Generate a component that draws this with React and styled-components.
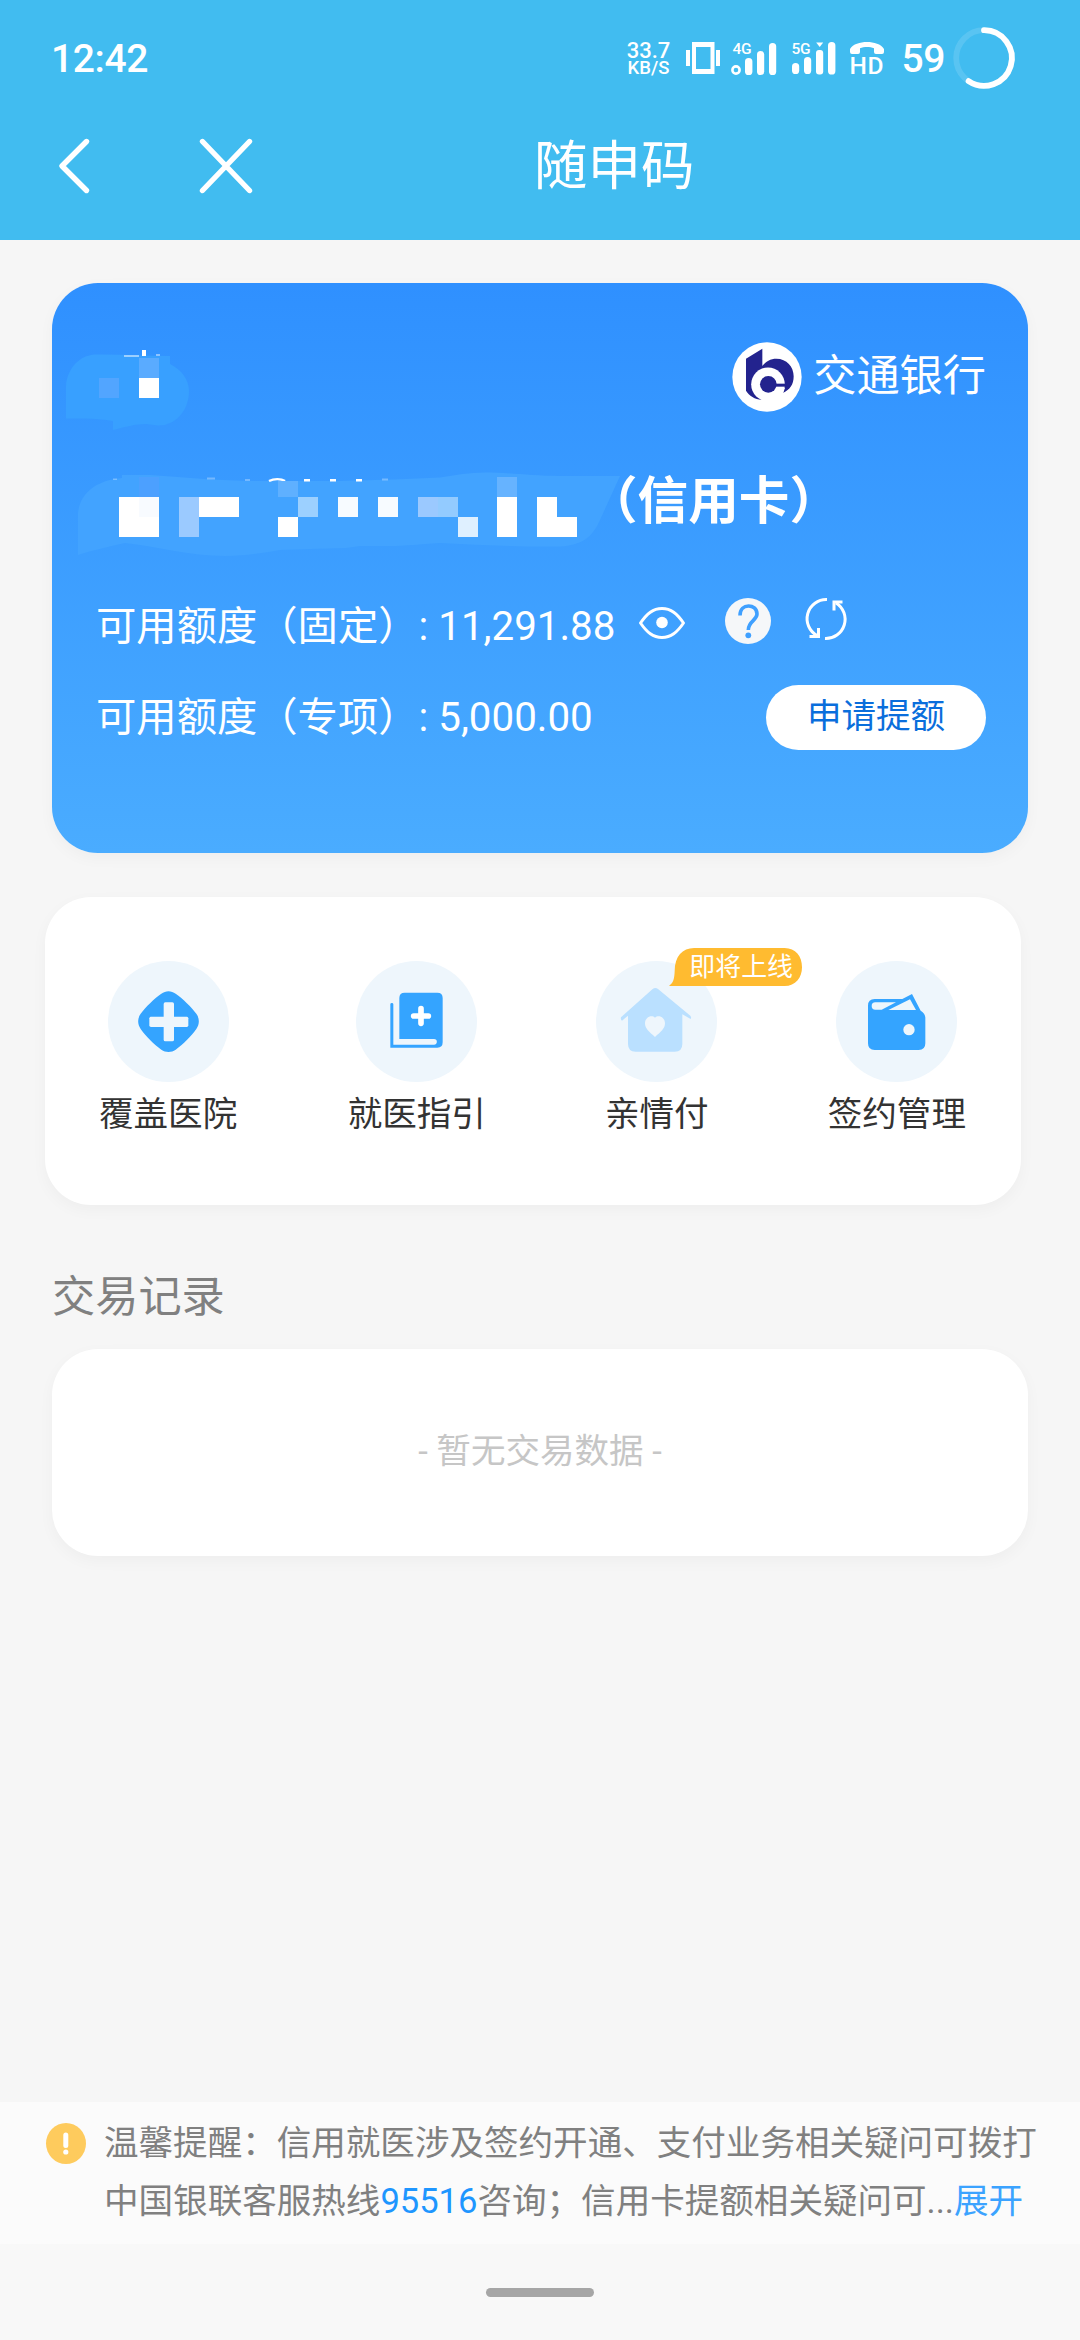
import React from 'react';
import styled, { createGlobalStyle } from "styled-components"

const GlobalStyle = createGlobalStyle
`
* {
    box-sizing: border-box;
}
body {
    margin: 0;
    background: #f6f6f6;
    font-family: Roboto, "Noto Sans CJK SC", sans-serif;
}
svg {
    display: block;
    flex: none;
    overflow: visible;
}
`

const Page = styled.div
`
width: 1080px;
height: 2340px;
display: flex;
flex-direction: column;
background: #f6f6f6;
overflow: hidden;
`

const Header = styled.header
`
height: 240px;
background: #41bcf0;
color: #ffffff;
`

const StatusBar = styled.div
`
height: 116px;
padding: 0 65px 0 51px;
display: flex;
align-items: center;
justify-content: space-between;
`

const StatusText = styled.div
`
padding-top: 1px;
font-size: 39px;
font-weight: 500;
letter-spacing: -0.4px;
line-height: 48px;
white-space: nowrap;
`

const StatusRight = styled.div
`
display: flex;
align-items: center;
`

const StatusIcon = styled.div
`
margin-left: ${props => props.$gap}px;
margin-bottom: ${props => props.$lift || 0}px;
`

const NetSpeed = styled.div
`
width: 42px;
padding-top: 3px;
font-weight: 500;
text-align: center;
white-space: nowrap;
display: flex;
flex-direction: column;
align-items: center;
`

const NetValue = styled.div
`
font-size: 22px;
line-height: 18px;
`

const NetUnit = styled.div
`
font-size: 18.5px;
line-height: 17px;
`

const NavBar = styled.div
`
height: 100px;
padding-left: 58px;
display: flex;
align-items: center;
`

const CloseButton = styled.div
`
margin-left: 110px;
`

const NavTitle = styled.div
`
margin-left: 282px;
padding-top: 2px;
font-size: 53.5px;
line-height: 100px;
`

const Content = styled.main
`
flex: 1;
`

const Panel = styled.section
`
border-radius: 46px;
box-shadow: 0 5px 16px rgba(0, 0, 0, 0.035);
`

const BankCard = styled(Panel)
`
width: 976px;
height: 570px;
margin: 43px 0 0 52px;
padding: 59px 42px 0 0;
background: linear-gradient(180deg, #2f90ff 0%, #4aacff 100%);
color: #ffffff;
`

const CardTop = styled.div
`
height: 88px;
padding-left: 14px;
display: flex;
justify-content: space-between;
`

const NameArea = styled.div
`
padding-top: 7px;
`

const Bank = styled.div
`
height: 70px;
display: flex;
align-items: center;
gap: 11px;
font-size: 43.2px;
line-height: 64px;
`

const CardNumber = styled.div
`
height: 86px;
margin-top: 41px;
padding-left: 26px;
display: flex;
`

const CardKind = styled.div
`
margin-left: -34px;
font-size: 50.6px;
font-weight: 700;
line-height: 61px;
`

const LimitRow = styled.div
`
height: ${props => props.$height}px;
padding-left: 44px;
display: flex;
align-items: center;
font-size: 40.32px;
line-height: 48px;
white-space: nowrap;
`

const LimitText = styled.div
`
padding-top: 2px;
`

const LimitIcons = styled.div
`
margin: -6px 0 0 24px;
display: flex;
align-items: center;
`

const ApplyButton = styled.div
`
width: 220px;
height: 65px;
margin-left: auto;
border-radius: 33px;
background: #ffffff;
color: #0a6edc;
font-size: 34.56px;
line-height: 63px;
text-align: center;
`

const ServicePanel = styled(Panel)
`
width: 976px;
height: 308px;
margin: 44px 0 0 45px;
padding: 64px 55px 0 54px;
display: flex;
justify-content: space-between;
align-items: flex-start;
background: #ffffff;
`

const Service = styled.div
`
min-width: 121px;
display: flex;
flex-direction: column;
align-items: center;
position: relative;
`

const ServiceCircle = styled.div
`
width: 121px;
height: 121px;
border-radius: 50%;
background: #eef6fc;
`

const ServiceName = styled.div
`
margin-top: 7px;
font-size: 34.56px;
line-height: 50px;
color: #333333;
`

const Badge = styled.div
`
position: absolute;
left: 73px;
top: -13px;
width: 133px;
height: 38px;
`

const BadgeText = styled.div
`
position: absolute;
left: 20px;
top: 0;
font-size: 25.92px;
line-height: 38px;
color: #ffffff;
white-space: nowrap;
`

const SectionTitle = styled.h2
`
margin: 63px 0 0 52px;
font-size: 43.2px;
font-weight: 400;
line-height: 60px;
color: #808080;
`

const EmptyPanel = styled(Panel)
`
width: 976px;
height: 207px;
margin: 21px 0 0 52px;
background: #ffffff;
color: #c6c6c6;
font-size: 34.56px;
line-height: 204px;
text-align: center;
`

const Notice = styled.div
`
height: 142px;
padding: 13px 0 0 46px;
display: flex;
background: #fbfbfb;
`

const NoticeIcon = styled.div
`
margin-top: 8px;
`

const NoticeText = styled.div
`
margin-left: 18px;
font-size: 34.56px;
line-height: 57.6px;
color: #808080;
white-space: nowrap;
`

const Phone = styled.span
`
color: #1e96ff;
`

const Expand = styled.span
`
color: #3ba3ff;
`

const HomeArea = styled.div
`
height: 96px;
padding-top: 44px;
background: #f8f8f8;
`

const HomeBar = styled.div
`
width: 108px;
height: 9px;
margin: 0 auto;
border-radius: 5px;
background: #a6a6a6;
`

const TinyLabel = styled.text
`
font-family: Roboto, sans-serif;
font-size: ${props => props.$size}px;
font-weight: 500;
fill: #ffffff;
`

const VibrateIcon = () => (
    <svg width="34" height="34" viewBox="0 0 34 34" fill="#fff">
        <path fillRule="evenodd" d="M6 1H28.5V33H6ZM10 6V28H24.5V6Z" />
        <rect x="0" y="9" width="4" height="16" />
        <rect x="30" y="9" width="4" height="16" />
    </svg>
)

const Signal4G = () => (
    <svg width="44" height="34" viewBox="0 0 44 34" fill="#fff">
        <TinyLabel $size={15.5} x="0.5" y="12.5" textLength="19">4G</TinyLabel>
        <circle cx="4" cy="29" r="3.6" fill="none" stroke="#fff" strokeWidth="2.6" />
        <rect x="13" y="17" width="7.4" height="17" rx="3.6" />
        <rect x="25" y="10" width="7.2" height="24" rx="3.6" />
        <rect x="37" y="2" width="7.2" height="32" rx="3.6" />
    </svg>
)

const Signal5G = () => (
    <svg width="44" height="34" viewBox="0 0 44 34" fill="#fff">
        <TinyLabel $size={15.5} x="-0.5" y="12.5" textLength="19">5G</TinyLabel>
        <rect x="0" y="22" width="7.2" height="11" rx="3.6" />
        <rect x="12" y="16" width="7.2" height="17" rx="3.6" />
        <rect x="24" y="9" width="7.2" height="24.5" rx="3" />
        <path d="M24.2 1.5H31.2L27.7 6Z" />
        <rect x="36" y="1" width="7.4" height="32.5" rx="3.6" />
    </svg>
)

const HdIcon = () => (
    <svg width="34" height="34" viewBox="0 0 34 34" fill="#fff">
        <path d="M0 11V8C3 3 10 1 17 1S31 3 34 8V11Q34 13 32 13H26Q24 13 24 11V7.2C20 5.6 14 5.6 10 7.2V11Q10 13 8 13H2Q0 13 0 11Z" />
        <TinyLabel $size={24.5} x="-0.5" y="33" textLength="34">HD</TinyLabel>
    </svg>
)

const BatteryRing = () => (
    <svg width="62" height="62" viewBox="0 0 62 62" fill="none" strokeWidth="5.8" strokeLinecap="round">
        <circle cx="31" cy="31" r="27.8" stroke="#fff" strokeOpacity="0.13" />
        <path d="M31 3.2A27.8 27.8 0 1 1 15.6 54.1" stroke="#fff" />
    </svg>
)

const BackIcon = () => (
    <svg width="34" height="58" viewBox="0 0 34 58" fill="none" stroke="#fff" strokeWidth="5.4" strokeLinecap="round" strokeLinejoin="round">
        <path d="M28.5 4.5L4 29L28.5 53.5" />
    </svg>
)

const CloseIcon = () => (
    <svg width="50" height="58" viewBox="0 0 50 58" stroke="#fff" strokeWidth="5.4" strokeLinecap="round">
        <path d="M0.5 4.5L47.5 53.5M47.5 4.5L0.5 53.5" />
    </svg>
)

// name covered by a mosaic brush
const NameMosaic = () => (
    <svg width="124" height="82" viewBox="66 349 124 82" shapeRendering="crispEdges">
        <path shapeRendering="auto" fill="#38a0ff" d="M66 418.5V386C67 370 78 356 94 354.5C120 354 145 356 170 356V364C182 370 189 380 189 391C189 412 174 426 158 425.5L146 424C135 424 125 427 113 430V421C98 418 82 418.5 66 418.5Z" />
        <rect x="124" y="355" width="15" height="2" fill="#fff" fillOpacity="0.5" />
        <rect x="142" y="350" width="4" height="6" fill="#fff" />
        <rect x="156" y="354" width="4" height="2" fill="#fff" fillOpacity="0.45" />
        <rect x="99" y="378" width="20" height="20" fill="#52a5ff" />
        <rect x="139" y="358" width="20" height="20" fill="#5aabff" />
        <rect x="139" y="378" width="20" height="20" fill="#fff" />
    </svg>
)

const numberBlocks = [
    [139, 477, 20, 20, '#4ca0ff'],
    [119, 497, 40, 40, '#ffffff'],
    [139, 497, 20, 20, '#f8fbff'],
    [179, 497, 20, 40, '#9bcaff'],
    [199, 497, 40, 20, '#ffffff'],
    [278, 481, 20, 16, '#5fb0ff'],
    [298, 497, 20, 20, '#9cd0ff'],
    [278, 517, 20, 20, '#ffffff'],
    [338, 497, 20, 20, '#f7fbff'],
    [378, 497, 20, 20, '#f7fbff'],
    [418, 497, 20, 20, '#9bc9ff'],
    [438, 497, 20, 20, '#93cbff'],
    [458, 517, 20, 20, '#dff0ff'],
    [497, 477, 20, 20, '#66b3ff'],
    [497, 497, 20, 40, '#ffffff'],
    [537, 497, 20, 40, '#ffffff'],
    [557, 517, 20, 20, '#ffffff'],
];

const NumberMosaic = () => (
    <svg width="543" height="86" viewBox="78 471 543 86">
        <path fill="#42a3ff" d="M78 555V513C80 492 98 480 122 478V475H150C190 478 225 481 262 481H340C380 480 410 479 440 477.5C455 475 470 472.5 485 472.5C510 472.5 530 476 560 476H620L600 520C592 538 582 545 560 546.5C520 547 480 545 440 543C420 544 405 546 390 546H360L346 548C320 549 300 549 280 550C262 553 245 556 225 556C190 556 155 546 125 543C108 547 93 550 78 555Z" />
        <path fill="none" stroke="#fff" strokeWidth="2.4" d="M269 481C274 478.5 281 478.5 285 481" />
        <g fill="#fff">
            <rect x="304" y="479" width="6" height="2.5" />
            <rect x="330" y="479" width="6" height="2.5" />
            <rect x="356" y="479" width="6" height="2.5" />
            <g fillOpacity="0.3">
                <rect x="382" y="478.5" width="6" height="2" />
                <rect x="245" y="479" width="5" height="2" />
                <rect x="207" y="477.5" width="8" height="2" />
                <rect x="113" y="478.5" width="4" height="1.5" />
            </g>
        </g>
        <g shapeRendering="crispEdges">
            {numberBlocks.map(([x, y, w, h, color], i) => (
                <rect key={i} x={x} y={y} width={w} height={h} fill={color} />
            ))}
        </g>
    </svg>
)

const BankLogo = () => (
    <svg width="70" height="70" viewBox="-1 0 210 210">
        <circle cx="104" cy="105" r="104" fill="#fff" />
        <path fill="#23238e" d="M41 50L90 20V72C100 58 115 50 132 50C163 50 184 74 184 103C184 128 172 144 153 152L108 127L88 173C68 173 50 160 41 146Z" />
        <circle cx="107" cy="127" r="50.5" fill="#fff" />
        <path fill="#fff" d="M107 137H158L152 155L120 176H92Z" />
        <circle cx="108" cy="127" r="25" fill="#23238e" />
        <path fill="#23238e" d="M128 125H162V134H128Z" />
    </svg>
)

const EyeIcon = () => (
    <svg width="46" height="32" viewBox="0 0 46 32" fill="none" stroke="#fff" strokeWidth="3">
        <path d="M1.5 16C8 6.5 14 1.5 23 1.5S38 6.5 44.5 16C38 25.5 32 30.5 23 30.5S8 25.5 1.5 16Z" strokeLinejoin="round" />
        <circle cx="23" cy="15.5" r="5.8" fill="#fff" stroke="none" />
    </svg>
)

const HelpIcon = () => (
    <svg width="46" height="46" viewBox="0 0 46 46" fill="none">
        <circle cx="23" cy="23" r="23" fill="#f5f7f9" />
        <path d="M15 17.5C15 4.5 32 5.5 32 16C32 22.5 23.3 23 23.3 32" stroke="#3fa0ff" strokeWidth="3.6" />
        <circle cx="23.3" cy="37.3" r="2.9" fill="#3fa0ff" />
    </svg>
)

const RefreshIcon = () => (
    <svg width="40" height="42" viewBox="0 0 40 42" fill="none" stroke="#fff" strokeWidth="3">
        <path d="M21 1.5A19.2 19.2 0 0 0 11 37.5" />
        <path d="M3.5 38.5H12.5V30" />
        <path d="M19 40.5A19.2 19.2 0 0 0 30 5" />
        <path d="M36.5 4H28V12.5" />
    </svg>
)

const HospitalIcon = () => (
    <svg width="121" height="121" viewBox="0 0 363 363">
        <path fill="#34a4ff" d="M160 98C173 88 190 88 203 98C225 113 250 138 265 158C275 172 275 190 265 204C250 226 225 250 203 266C190 275 173 275 160 266C138 250 113 226 98 204C88 190 88 172 98 158C113 138 138 113 160 98Z" />
        <rect x="167" y="124" width="31" height="117" rx="5" fill="#eef6fc" />
        <rect x="124" y="167" width="117" height="31" rx="5" fill="#eef6fc" />
    </svg>
)

const GuideIcon = () => (
    <svg width="121" height="121" viewBox="0 0 363 363">
        <path fill="#34a4ff" d="M146 95H244Q260 95 260 111V244Q260 260 244 260H103V130Q103 126 107.5 126Q112 126 112 130V251H234A8.5 8.5 0 0 0 234 234H130V111Q130 95 146 95Z" />
        <path stroke="#fff" strokeWidth="17" strokeLinecap="round" d="M195 143V187M173 165H217" />
    </svg>
)

const FamilyIcon = () => (
    <svg width="121" height="121" viewBox="0 0 363 363">
        <path fill="#bae0ff" d="M170 84Q178 78 186 84L283 164Q287 169 284 174L259 160V249Q259 272 236 272H119Q96 272 96 249V164L78 179Q73 175 75 169Z" />
        <path fill="#eef6fc" d="M177 228C160 213 147 203 147 187C147 168 167 160 177 170C187 160 207 168 207 187C207 203 194 213 177 228Z" />
    </svg>
)

const WalletIcon = () => (
    <svg width="121" height="121" viewBox="0 0 363 363">
        <path fill="#34a4ff" d="M116 114H199L228 99L254 149Q268 157 268 171V247Q268 267 248 267H116Q96 267 96 247V134Q96 114 116 114Z" />
        <path fill="#eef6fc" d="M118 124H180L137 146H118Q107 146 107 135Q107 124 118 124Z" />
        <path fill="#eef6fc" d="M157 147L222 115L240 147Z" />
        <circle cx="219" cy="206" r="17" fill="#eef6fc" />
    </svg>
)

const BadgeShape = () => (
    <svg width="133" height="38" viewBox="0 0 397 113">
        <path fill="#ffbb30" d="M0 113C14 104 16 90 17 68C17 25 40 0 75 0H345C378 0 397 25 397 57C397 88 378 113 345 113Z" />
    </svg>
)

const WarnIcon = () => (
    <svg width="40" height="41" viewBox="0 0 40 41">
        <ellipse cx="20" cy="20.5" rx="20" ry="20.5" fill="#fecb5d" />
        <rect x="17.3" y="9.5" width="5" height="15.5" rx="2.5" fill="#fff" />
        <circle cx="19.8" cy="29" r="2.6" fill="#fff" />
    </svg>
)

const services = [
    { name: '覆盖医院', Icon: HospitalIcon },
    { name: '就医指引', Icon: GuideIcon },
    { name: '亲情付', Icon: FamilyIcon, badge: '即将上线' },
    { name: '签约管理', Icon: WalletIcon },
];

class App extends React.Component {

    render() {
        return (
            <Page>
                <GlobalStyle />
                <Header>
                    <StatusBar>
                        <StatusText>12:42</StatusText>
                        <StatusRight>
                            <NetSpeed>
                                <NetValue>33.7</NetValue>
                                <NetUnit>KB/S</NetUnit>
                            </NetSpeed>
                            <StatusIcon $gap={17}><VibrateIcon /></StatusIcon>
                            <StatusIcon $gap={12}><Signal4G /></StatusIcon>
                            <StatusIcon $gap={16}><Signal5G /></StatusIcon>
                            <StatusIcon $gap={14}><HdIcon /></StatusIcon>
                            <StatusIcon $gap={17}><StatusText>59</StatusText></StatusIcon>
                            <StatusIcon $gap={8}><BatteryRing /></StatusIcon>
                        </StatusRight>
                    </StatusBar>
                    <NavBar>
                        <BackIcon />
                        <CloseButton><CloseIcon /></CloseButton>
                        <NavTitle>随申码</NavTitle>
                    </NavBar>
                </Header>

                <Content>
                    <BankCard>
                        <CardTop>
                            <NameArea><NameMosaic /></NameArea>
                            <Bank>
                                <BankLogo />
                                交通银行
                            </Bank>
                        </CardTop>
                        <CardNumber>
                            <NumberMosaic />
                            <CardKind>（信用卡）</CardKind>
                        </CardNumber>
                        <LimitRow $height={138}>
                            <LimitText>可用额度（固定）: 11,291.88</LimitText>
                            <LimitIcons>
                                <EyeIcon />
                                <StatusIcon $gap={40} $lift={4}><HelpIcon /></StatusIcon>
                                <StatusIcon $gap={35} $lift={9}><RefreshIcon /></StatusIcon>
                            </LimitIcons>
                        </LimitRow>
                        <LimitRow $height={44}>
                            <LimitText>可用额度（专项）: 5,000.00</LimitText>
                            <ApplyButton>申请提额</ApplyButton>
                        </LimitRow>
                    </BankCard>

                    <ServicePanel>
                        {services.map(({ name, Icon, badge }) => (
                            <Service key={name}>
                                <ServiceCircle><Icon /></ServiceCircle>
                                <ServiceName>{name}</ServiceName>
                                {badge && (
                                    <Badge>
                                        <BadgeShape />
                                        <BadgeText>{badge}</BadgeText>
                                    </Badge>
                                )}
                            </Service>
                        ))}
                    </ServicePanel>

                    <SectionTitle>交易记录</SectionTitle>
                    <EmptyPanel>- 暂无交易数据 -</EmptyPanel>
                </Content>

                <Notice>
                    <NoticeIcon><WarnIcon /></NoticeIcon>
                    <NoticeText>
                        温馨提醒：信用就医涉及签约开通、支付业务相关疑问可拨打<br />
                        中国银联客服热线<Phone>95516</Phone>咨询；信用卡提额相关疑问可...<Expand>展开</Expand>
                    </NoticeText>
                </Notice>
                <HomeArea>
                    <HomeBar />
                </HomeArea>
            </Page>
        )
    }
}

export default App;
